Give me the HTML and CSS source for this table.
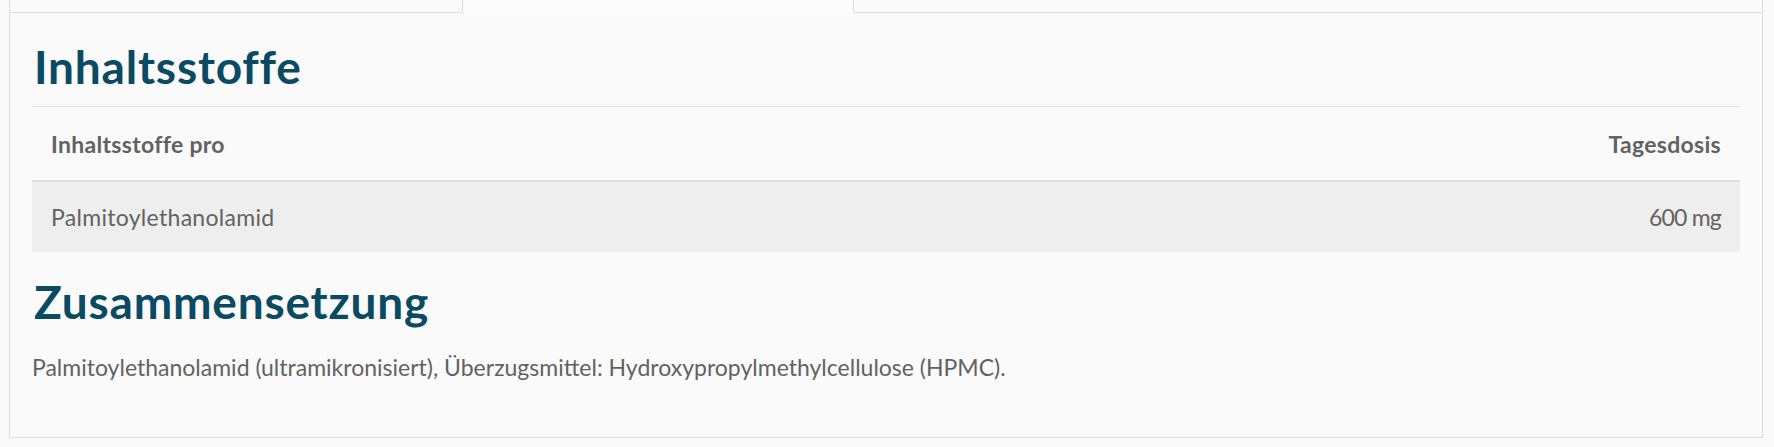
FILE: index.html
```html
<!DOCTYPE html>
<html lang="de">

<head>
    <meta charset="UTF-8">
    <meta name="viewport" content="width=device-width, initial-scale=1.0">
    <title>Inhaltsstoffe</title>
    <link rel="stylesheet" href="styles.css">
</head>

<body>
    <div class="product-tabs">
        <div class="tab-bar">
            <div class="tab tab-first"></div>
            <div class="tab tab-active"></div>
            <div class="tab tab-rest"></div>
        </div>
        <div class="tab-panel">
            <h2 class="section-title section-title-line">Inhaltsstoffe</h2>
            <table class="ingredients">
                <thead>
                    <tr>
                        <th>Inhaltsstoffe pro</th>
                        <th class="right">Tagesdosis</th>
                    </tr>
                </thead>
                <tbody>
                    <tr>
                        <td>Palmitoylethanolamid</td>
                        <td class="right dose">600 mg</td>
                    </tr>
                </tbody>
            </table>
            <h2 class="section-title">Zusammensetzung</h2>
            <p class="composition">Palmitoylethanolamid (ultramikronisiert), Überzugsmittel: Hydroxypropylmethylcellulose (HPMC).</p>
        </div>
    </div>
</body>
</html>
```

FILE: styles.css
```css
* {
    margin: 0;
    box-sizing: border-box;
    padding: 0;
}

body {
    background: #fafafa;
    font-family: "Source Sans Pro", Lato, sans-serif;
    color: #626262;
}

.product-tabs {
    margin: 0 11px 0 9px;
}

.tab-bar {
    display: flex;
    height: 13px;
}

.tab {
    border-bottom: 1px solid #dedede;
}

.tab-first {
    width: 453px;
    border-left: 1px solid #dedede;
}

.tab-active {
    width: 392px;
    border: 1px solid #dedede;
    border-top: 0;
    border-bottom: 0;
    background: #fcfcfc;
}

.tab-rest {
    flex: 1;
    border-right: 1px solid #dedede;
}

.tab-panel {
    border: 1px solid #dedede;
    border-top: 0;
    background: #fafafa;
    padding: 27px 22px 55px;
}

.section-title {
    font-size: 46px;
    line-height: 53px;
    font-weight: 700;
    letter-spacing: 0.8px;
    color: #0b4a63;
    padding-left: 2px;
}

.section-title-line {
    padding-bottom: 13px;
    border-bottom: 1px solid #e4e4e4;
}

.ingredients {
    width: 100%;
    border-collapse: collapse;
    font-size: 23px;
    letter-spacing: 0.3px;
}

.ingredients th {
    height: 74px;
    padding: 0 19px;
    text-align: left;
    font-weight: 700;
    border-bottom: 2px solid #dfe0e6;
}

.ingredients td {
    height: 71px;
    padding: 0 19px;
    background: #eeeeee;
}

.ingredients .right {
    text-align: right;
}

.ingredients .dose {
    letter-spacing: -0.8px;
}

.ingredients + .section-title {
    margin-top: 23px;
}

.composition {
    font-size: 23px;
    line-height: 30px;
    margin-top: 24px;
}
```
